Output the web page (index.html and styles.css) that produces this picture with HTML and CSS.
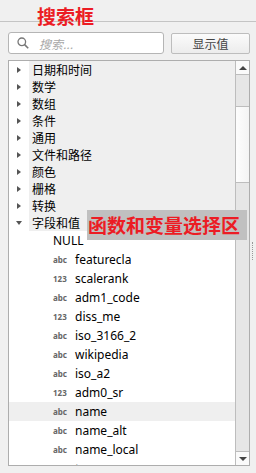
FILE: index.html
```html
<!DOCTYPE html>
<html lang="zh">
<head>
    <meta charset="UTF-8">
    <title>表达式</title>
    <link rel="stylesheet" href="styles.css">
</head>
<body>

<div class="topbar"></div>

<div class="search-row">
    <div class="search">
        <svg class="search-icon" width="12" height="12" viewBox="0 0 12 12">
            <circle cx="4.8" cy="4.8" r="3.8" fill="none" stroke="#777" stroke-width="1.3"/>
            <line x1="7.6" y1="7.6" x2="11.2" y2="11.2" stroke="#777" stroke-width="1.6"/>
        </svg>
        <span class="placeholder">搜索...</span>
    </div>
    <div class="btn">显示值</div>
</div>

<div class="main">
    <div class="list">
        <div class="tree">
            <div class="group"><span class="branch"><i class="arrow-right"></i></span><span class="label">日期和时间</span></div>
            <div class="group"><span class="branch"><i class="arrow-right"></i></span><span class="label">数学</span></div>
            <div class="group"><span class="branch"><i class="arrow-right"></i></span><span class="label">数组</span></div>
            <div class="group"><span class="branch"><i class="arrow-right"></i></span><span class="label">条件</span></div>
            <div class="group"><span class="branch"><i class="arrow-right"></i></span><span class="label">通用</span></div>
            <div class="group"><span class="branch"><i class="arrow-right"></i></span><span class="label">文件和路径</span></div>
            <div class="group"><span class="branch"><i class="arrow-right"></i></span><span class="label">颜色</span></div>
            <div class="group"><span class="branch"><i class="arrow-right"></i></span><span class="label">栅格</span></div>
            <div class="group"><span class="branch"><i class="arrow-right"></i></span><span class="label">转换</span></div>
            <div class="group"><span class="branch"><i class="arrow-down"></i></span><span class="label">字段和值</span></div>

            <div class="field"><span class="null">NULL</span></div>
            <div class="field"><span class="type">abc</span>featurecla</div>
            <div class="field"><span class="type">123</span>scalerank</div>
            <div class="field"><span class="type">abc</span>adm1_code</div>
            <div class="field"><span class="type">123</span>diss_me</div>
            <div class="field"><span class="type">abc</span>iso_3166_2</div>
            <div class="field"><span class="type">abc</span>wikipedia</div>
            <div class="field"><span class="type">abc</span>iso_a2</div>
            <div class="field"><span class="type">123</span>adm0_sr</div>
            <div class="field selected"><span class="type">abc</span>name</div>
            <div class="field"><span class="type">abc</span>name_alt</div>
            <div class="field"><span class="type">abc</span>name_local</div>
            <div class="field"><span class="type">abc</span>type</div>
        </div>
        <div class="scrollbar">
            <div class="sb-btn up"><i class="sb-arrow-up"></i></div>
            <div class="sb-track">
                <div class="sb-space"></div>
                <div class="sb-thumb"></div>
            </div>
            <div class="sb-btn down"><i class="sb-arrow-down"></i></div>
        </div>
    </div>
    <div class="grip"></div>
</div>

<!-- annotations drawn on top of the screenshot -->
<div class="note note-title">搜索框</div>
<div class="note note-list">函数和变量选择区</div>

</body>
</html>
```

FILE: styles.css
```css
body {
    margin: 0;
    position: relative;
    background: #f0f0f0;
    font-family: "Noto Sans", "Noto Sans CJK SC", sans-serif;
    font-size: 12px;
    color: #000;
}

.topbar {
    height: 21px;
    border-bottom: 1px solid #c4c4c4;
}

.search-row {
    display: flex;
    align-items: flex-start;
    gap: 7px;
    padding: 10px 6px 0 8px;
}

.search {
    box-sizing: border-box;
    width: 156px;
    height: 22px;
    display: flex;
    align-items: center;
    padding-left: 8px;
    background: #fff;
    border: 1px solid #b5b5b5;
    border-radius: 3px;
}

.search-icon {
    flex: none;
}

.placeholder {
    margin-left: 10px;
    color: #a8a8a8;
    font-style: italic;
    font-family: "Noto Sans CJK SC", sans-serif;
}

.btn {
    box-sizing: border-box;
    width: 79px;
    height: 21px;
    margin-top: 1px;
    line-height: 19px;
    text-align: center;
    color: #444;
    font-family: "Noto Sans CJK SC", sans-serif;
    background: linear-gradient(#fbfbfb, #ececec);
    border: 1px solid #bdbdbd;
    border-radius: 2px;
}

.main {
    display: flex;
    padding: 6px 0 0 8px;
}

.list {
    box-sizing: border-box;
    width: 242px;
    height: 406px;
    display: flex;
    background: #fff;
    border: 1px solid #adadad;
}

.tree {
    flex: 1;
    overflow: hidden;
}

.group {
    display: flex;
    height: 17px;
}

.branch {
    width: 20px;
    flex: none;
    display: flex;
    align-items: center;
}

.arrow-right {
    margin-left: 8px;
    width: 0;
    height: 0;
    border-left: 4px solid #555;
    border-top: 3px solid transparent;
    border-bottom: 3px solid transparent;
}

.arrow-down {
    margin-left: 7px;
    width: 0;
    height: 0;
    border-top: 4px solid #555;
    border-left: 3px solid transparent;
    border-right: 3px solid transparent;
}

.label {
    flex: 1;
    padding-left: 3px;
    line-height: 17px;
    background: #efefef;
    font-family: "Noto Sans CJK SC", sans-serif;
}

.field {
    display: flex;
    align-items: center;
    height: 19px;
    padding-left: 44px;
    white-space: nowrap;
}

.field.selected {
    background: #efefef;
}

.type {
    width: 22px;
    flex: none;
    font-size: 8px;
    font-weight: bold;
    color: #666;
}

.null {
    font-size: 12px;
}

.scrollbar {
    width: 13px;
    flex: none;
    display: flex;
    flex-direction: column;
    border-left: 1px solid #bdbdbd;
}

.sb-btn {
    height: 13px;
    display: flex;
    align-items: center;
    justify-content: center;
    background: #fafafa;
}

.sb-btn.up {
    border-bottom: 1px solid #bdbdbd;
}

.sb-btn.down {
    border-top: 1px solid #bdbdbd;
}

.sb-arrow-up {
    width: 0;
    height: 0;
    border-bottom: 4px solid #444;
    border-left: 4px solid transparent;
    border-right: 4px solid transparent;
}

.sb-arrow-down {
    width: 0;
    height: 0;
    border-top: 4px solid #444;
    border-left: 4px solid transparent;
    border-right: 4px solid transparent;
}

.sb-track {
    flex: 1;
    background: #e6e6e6;
}

.sb-space {
    height: 31px;
}

.sb-thumb {
    height: 75px;
    background: linear-gradient(90deg, #fdfdfd, #f4f4f4);
    border-top: 1px solid #bdbdbd;
    border-bottom: 1px solid #bdbdbd;
}

.grip {
    width: 0;
    height: 18px;
    margin: 182px 0 0 2px;
    border-left: 1px dotted #999;
}

.note {
    position: absolute;
    color: #ec1c24;
    font-family: "Noto Sans CJK SC", sans-serif;
    font-weight: bold;
    font-size: 19px;
    white-space: nowrap;
}

.note-title {
    left: 37px;
    top: 5px;
    line-height: 21px;
}

.note-list {
    left: 87px;
    top: 210px;
    height: 30px;
    line-height: 30px;
    padding: 0 7px 0 1px;
    background: #c0c0c0;
}
```
